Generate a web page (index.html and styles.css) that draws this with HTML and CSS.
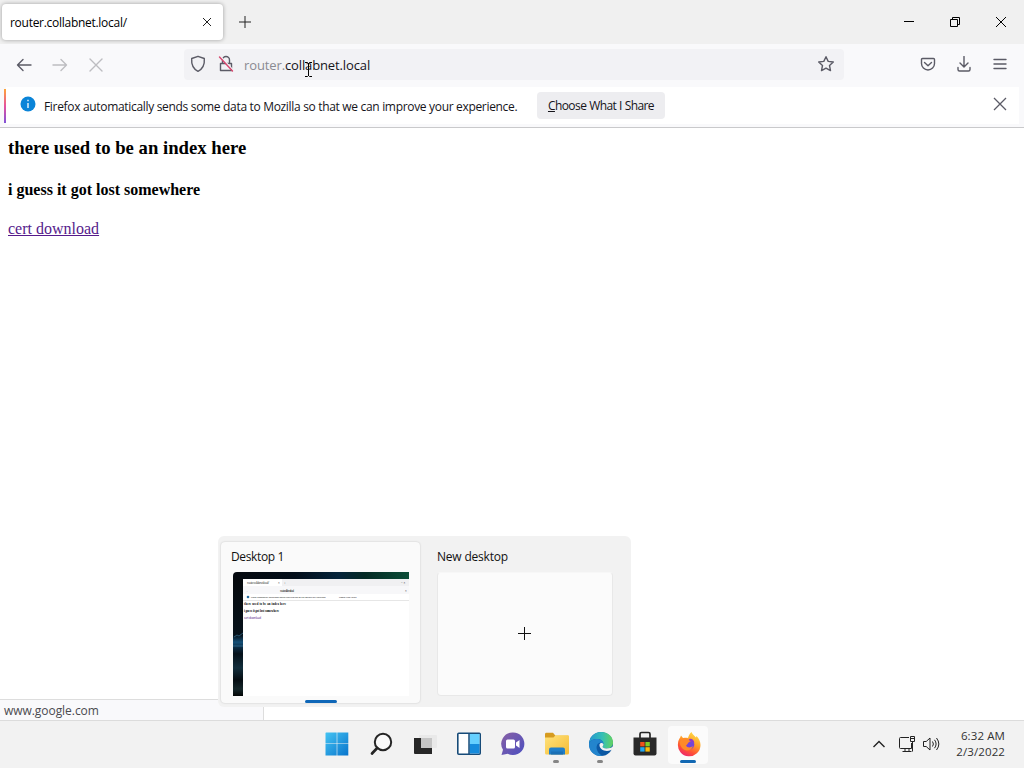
FILE: index.html
```
<!DOCTYPE html>
<html lang="en">
  <head>
    <meta charset="UTF-8" />
    <meta name="viewport" content="width=device-width, initial-scale=1.0" />
    <title>router.collabnet.local/</title>
    <link rel="stylesheet" href="styles.css">
  </head>

  <body>
    <div class="browser">
      <header class="titlebar">
        <div class="tab">
          <span class="tab-title">router.collabnet.local/</span>
          <svg class="tab-close" width="10" height="10" viewBox="0 0 10 10"><path d="M1 1l8 8M9 1l-8 8" /></svg>
        </div>
        <svg class="new-tab" width="12" height="12" viewBox="0 0 12 12"><path d="M6 0v12M0 6h12" /></svg>
        <div class="window-buttons">
          <svg width="12" height="12" viewBox="0 0 12 12"><path d="M1 5.500h10" /></svg>
          <svg width="12" height="12" viewBox="0 0 12 12"><path d="M1.500 3.500h7v7h-7zM3.500 3.500v-2h7v7h-2" /></svg>
          <svg width="12" height="12" viewBox="0 0 12 12"><path d="M1 1l10 10M11 1L1 11" /></svg>
        </div>
      </header>

      <nav class="toolbar">
        <div class="nav-buttons">
          <svg width="16" height="16" viewBox="0 0 16 16"><path d="M15 8H1.500M7 2.500L1.500 8 7 13.500" /></svg>
          <svg class="disabled" width="16" height="16" viewBox="0 0 16 16"><path d="M1 8h13.500M9 2.500L14.500 8 9 13.500" /></svg>
          <svg class="disabled" width="16" height="16" viewBox="0 0 16 16"><path d="M2 2l12 12M14 2L2 14" /></svg>
        </div>
        <div class="urlbar">
          <svg class="shield" width="16" height="18" viewBox="0 0 16 18"><path d="M8 1.300L14.300 3.500C14.800 9.500 12.500 14 8 16.300 3.500 14 1.200 9.500 1.700 3.500z" /></svg>
          <svg class="lock" width="16" height="18" viewBox="0 0 16 18">
            <path d="M4.500 8V5a3.500 3.500 0 0 1 7 0v3M2.500 8.500h11v7h-11z" />
            <path class="slash-gap" d="M2.500 1.500l13 14" />
            <path class="slash" d="M1.500 2l13 14" />
          </svg>
          <span class="url">router.<b>collabnet.local</b></span>
          <svg class="star" width="18" height="18" viewBox="0 0 18 18"><path d="M9 1.700l2.200 4.700 5.100.6-3.800 3.500 1 5.100L9 13.100l-4.500 2.500 1-5.100L1.700 7l5.100-.6z" /></svg>
        </div>
        <div class="tools">
          <svg width="16" height="16" viewBox="0 0 16 16"><path d="M2.500 2.500h11q1 0 1 1v4a6.500 6.500 0 0 1-13 0v-4q0-1 1-1zM4.500 6.500L8 9.800l3.500-3.300" /></svg>
          <svg width="16" height="16" viewBox="0 0 16 16"><path d="M8 .5v10M4 7l4 4 4-4M2 11.500v2q0 1.500 1.500 1.500h9q1.500 0 1.500-1.500v-2" /></svg>
          <svg width="16" height="16" viewBox="0 0 16 16"><path d="M2 3.500h12M2 8h12M2 12.500h12" /></svg>
        </div>
      </nav>

      <div class="notice">
        <svg class="info" width="16" height="16" viewBox="0 0 16 16">
          <circle cx="8" cy="8" r="7.500" />
          <path d="M8 7v5M8 3.800v1.400" />
        </svg>
        <span class="notice-text">Firefox automatically sends some data to Mozilla so that we can improve your experience.</span>
        <button class="share"><u>C</u>hoose What I Share</button>
        <svg class="notice-close" width="14" height="14" viewBox="0 0 14 14"><path d="M1 1l12 12M13 1L1 13" /></svg>
      </div>

      <main class="page">
        <h3>there used to be an index here</h3>
        <h4>i guess it got lost somewhere</h4>
        <a href="#">cert download</a>
      </main>

      <div class="status">www.google.com</div>
    </div>

    <svg class="cursor" width="9" height="17" viewBox="0 0 9 17"><path d="M1 1.500h2.500l1 1 1-1H8M4.500 2v13M1 15.500h2.500l1-1 1 1H8" /></svg>

    <section class="desktops">
      <div class="desktop current">
        <span class="desktop-name">Desktop 1</span>
        <svg class="thumb" width="176" height="124" viewBox="0 0 176 124">
          <defs>
            <linearGradient id="aurora">
              <stop offset="0" stop-color="#05090e" />
              <stop offset=".35" stop-color="#020d19" />
              <stop offset=".6" stop-color="#04233a" />
              <stop offset=".75" stop-color="#042a25" />
              <stop offset="1" stop-color="#0b4d37" />
            </linearGradient>
            <linearGradient id="lake" x2="0" y2="1">
              <stop offset="0" stop-color="#06090d" />
              <stop offset=".48" stop-color="#07121b" />
              <stop offset=".54" stop-color="#155078" />
              <stop offset=".59" stop-color="#0b2940" />
              <stop offset=".64" stop-color="#051019" />
              <stop offset=".76" stop-color="#122e3c" />
              <stop offset=".86" stop-color="#050d12" />
              <stop offset=".94" stop-color="#15272a" />
              <stop offset="1" stop-color="#020506" />
            </linearGradient>
          </defs>
          <path fill="url(#aurora)" d="M4 0h172v8H0V4q0-4 4-4z" />
          <path fill="url(#lake)" d="M0 7h10v117H0z" />
          <path stroke="#3c81a6" d="M1 65l3-2 2 1 4-3M0 74h10" opacity=".6" fill="none" />
          <path fill="#fff" d="M10 7h166v117H10z" />
          <path fill="#f0f0f2" d="M49 7h127v7H49z" />
          <path fill="#f7f7f9" d="M10 14h166v8H10z" />
          <path stroke="#e6e6e6" d="M10 28.500h166" />
          <g class="thumb-text">
            <text x="14" y="11.500" textLength="22">router.collabnet.local/</text>
            <text x="45" y="11.500">×</text>
            <text x="51" y="11.500">+</text>
            <text x="168" y="11.500">− ×</text>
            <text x="13" y="19.500">←</text>
            <text x="47" y="19.500" textLength="14">router.collabnet.local</text>
            <text x="172" y="19.500">×</text>
            <circle cx="15" cy="25" r="1.300" fill="#256ca0" />
            <text class="thumb-notice" x="18" y="26.200">Firefox automatically sends some data to Mozilla so that we can improve your experience.</text>
            <text class="thumb-notice" x="106" y="26.200">Choose What I Share</text>
            <g class="thumb-bold">
              <text x="11" y="33" textLength="42">there used to be an index here</text>
              <text x="11" y="40" textLength="35">i guess it got lost somewhere</text>
            </g>
            <text x="11" y="47" fill="#551a8b" textLength="17">cert download</text>
          </g>
        </svg>
        <div class="marker"></div>
      </div>
      <div class="desktop">
        <span class="desktop-name new">New desktop</span>
        <div class="add">
          <svg width="13" height="13" viewBox="0 0 13 13"><path d="M6.500 0v13M0 6.500h13" /></svg>
        </div>
      </div>
    </section>

    <footer class="taskbar">
      <div></div>
      <div class="apps">
        <!-- start -->
        <div class="app">
          <svg width="24" height="24" viewBox="0 0 24 24">
            <defs><linearGradient id="win" x2="1" y2="1"><stop stop-color="#45c4f3" /><stop offset="1" stop-color="#0874cc" /></linearGradient></defs>
            <path fill="url(#win)" d="M1 .5h10.700v11H.5V1zM12.300.5h11v11h-11zM.5 12.100h11.200v11.400H.5zM12.300 12.100h11v11.400h-11z" />
          </svg>
        </div>
        <!-- search -->
        <div class="app">
          <svg width="24" height="24" viewBox="0 0 24 24">
            <circle cx="14" cy="10" r="8.200" fill="#fafafa" stroke="#252525" stroke-width="2" />
            <path d="M8.200 16L3 21.500" stroke="#252525" stroke-width="2.700" stroke-linecap="round" />
          </svg>
        </div>
        <!-- task view -->
        <div class="app">
          <svg width="24" height="24" viewBox="0 0 24 24">
            <rect x="6" y="3" width="18" height="13" rx="1" fill="#e9e9e9" />
            <path d="M1 6h18v16H2q-1 0-1-1z" fill="#272727" />
            <path d="M8 6h11v10H8z" fill="#c5c5c5" />
          </svg>
        </div>
        <!-- widgets -->
        <div class="app">
          <svg width="24" height="24" viewBox="0 0 24 24">
            <rect x=".8" y="1.300" width="22.400" height="21" rx="1" fill="#fff" stroke="#174b78" stroke-width="1.600" />
            <path d="M12.500 2h10v10h-10z" fill="#66d0ff" />
            <path d="M12.500 12h10v9.500h-10z" fill="#168bdc" />
            <path d="M12 1v21" stroke="#174b78" stroke-width="1.500" />
          </svg>
        </div>
        <!-- chat -->
        <div class="app">
          <svg width="24" height="24" viewBox="0 0 24 24">
            <defs><linearGradient id="chat" x2="1" y2="1"><stop stop-color="#8860a5" /><stop offset="1" stop-color="#4b4fc0" /></linearGradient></defs>
            <path fill="url(#chat)" d="M12 .5a11.300 11.300 0 1 1-5.200 21.300L.5 23l1.500-5.200A11.300 11.300 0 0 1 12 .5z" />
            <rect x="5" y="7.500" width="9" height="9" rx="1.500" fill="#fff" />
            <path d="M15 10.500l3.500-2.500v8L15 13.500z" fill="#fff" />
          </svg>
        </div>
        <!-- explorer -->
        <div class="app">
          <svg width="26" height="24" viewBox="0 0 26 24">
            <defs><linearGradient id="folder" x2="1" y2="1"><stop stop-color="#ffe37c" /><stop offset="1" stop-color="#f5bb35" /></linearGradient></defs>
            <path fill="#d69b20" d="M2 .8h7l2.500 3H24v4H1V2q0-1 1-1.200z" />
            <path fill="url(#folder)" d="M1 5.500h8.500l2-2.300H24q1 0 1 1V21q0 1.500-1.500 1.500h-21Q1 22.500 1 21z" />
            <path fill="#207fc9" d="M5 22.500v-5q0-2 2-2h12q2 0 2 2v5z" />
            <path fill="#1a70b5" d="M7 19.500h12v3H7z" />
          </svg>
          <i class="running"></i>
        </div>
        <!-- edge -->
        <div class="app">
          <svg width="26" height="26" viewBox="0 0 26 26">
            <defs>
              <linearGradient id="edgeTop"><stop stop-color="#2497d0" /><stop offset=".55" stop-color="#34bfb6" /><stop offset="1" stop-color="#63d260" /></linearGradient>
              <linearGradient id="edgeLow" x2="1" y2="1"><stop stop-color="#0d5fb0" /><stop offset="1" stop-color="#0b559e" /></linearGradient>
            </defs>
            <circle cx="13" cy="13" r="12" fill="url(#edgeLow)" />
            <path fill="url(#edgeTop)" d="M1 12.500C2 5 7 1 13 1c7 0 12 4.500 12 10.500 0 4-3 6-6.500 6-3 0-4-1-4-1.700 0-.5 1-1 1-2.800C15.500 10 12.500 8 9 8c-4 0-7 2-8 4.500z" />
            <path fill="#2385cd" d="M1 12.500C3 8.800 6 8 9 8c3.500 0 6.500 2 6.500 5-2-2-5-1.500-6.200.5-2 3.500.2 9 5.200 11.300C6.500 26 .5 20 1 12.500z" />
            <path fill="#f2f2f2" d="M11.500 13.500c1-2 3-1.700 4-.5 0 1.800-1 2.300-1 2.800 0 .7 1 1.700 4 1.700 2.500 0 5-.7 7-2.500V18l-2.800 1.200c-5 2-11.500-.2-11.200-5.700z" />
          </svg>
          <i class="running"></i>
        </div>
        <!-- store -->
        <div class="app">
          <svg width="26" height="26" viewBox="0 0 26 26">
            <path d="M8 7V3q0-1.500 1.500-1.500h7Q18 1.500 18 3v4" fill="none" stroke="#252525" stroke-width="1.700" />
            <path d="M1.500 6.500h23v16q0 2-2 2h-19q-2 0-2-2z" fill="#282828" />
            <path d="M8.200 11h4.400v4.400H8.200z" fill="#f1511b" />
            <path d="M13.400 11h4.400v4.400h-4.400z" fill="#80cc28" />
            <path d="M8.200 16.200h4.400v4.400H8.200z" fill="#22a7f0" />
            <path d="M13.400 16.200h4.400v4.400h-4.400z" fill="#fbbc09" />
          </svg>
        </div>
        <!-- firefox -->
        <div class="app active">
          <svg width="26" height="26" viewBox="0 0 26 26">
            <defs><linearGradient id="fox" x1=".8" y1="0" x2=".3" y2="1"><stop stop-color="#ffe248" /><stop offset=".45" stop-color="#ff9b28" /><stop offset=".75" stop-color="#ff5136" /><stop offset="1" stop-color="#ed246e" /></linearGradient></defs>
            <path fill="url(#fox)" d="M15.500 1c1 2.500 3 3.500 4.500 5.500l.5-1.500c2.500 2.500 4 5.500 4 9A11.300 11.300 0 1 1 2 12.500C2 10 3 8 4.200 6.500L5 4.500 7 7c2-.5 4-.5 5 0 .8-2.500 1.500-4.500 3.500-6z" />
            <circle cx="13.500" cy="13.500" r="4.800" fill="#7545d8" />
            <path fill="#ff8a28" d="M5 8c3-1.500 6-1 8 .5l3 .5c-.5 1.500-2.500 1.500-3.500 2.500-.8 1-1 2-2.500 3 1 2.500 5 2.500 7 .5-1.500 5-8 6-11 2S4 11 5 8z" />
            <path fill="#9138c8" d="M13 8c3-1 5 1 5.300 4-1.500-1.500-3-2-4.500-1.500z" />
          </svg>
          <i class="running wide"></i>
        </div>
      </div>
      <div class="tray">
        <svg class="chevron" width="14" height="8" viewBox="0 0 14 8"><path d="M1.500 7L7 1.500 12.500 7" /></svg>
        <svg width="18" height="18" viewBox="0 0 18 18"><path d="M11 2.500H2.500q-1 0-1 1v9q0 1 1 1h11V8M7 13.500V16M11 13.500V16M4.500 16.500h9M12.500 1.500h4v5h-4zM12.500 3.500h4M14.500 6.500v10" /></svg>
        <svg width="18" height="16" viewBox="0 0 18 16"><path d="M1.500 5.500h2.700L8 2v12l-3.800-3.500H1.500zM10.500 5.500q1.800 2.500 0 5M12.500 3.800q3.200 4.200 0 8.400M14.500 2q4.700 6 0 12" /></svg>
        <div class="clock">
          <span>6:32 AM</span>
          <span>2/3/2022</span>
        </div>
      </div>
    </footer>
  </body>
</html>
```
FILE: styles.css
```
* {
  box-sizing: border-box;
}

body {
  margin: 0;
  width: 1024px;
  height: 768px;
  overflow: hidden;
  display: flex;
  flex-direction: column;
  font-family: "Open Sans", "Noto Sans", sans-serif;
  font-size: 12px;
  color: #15141a;
  background: #fff;
}

svg {
  display: block;
  flex: none;
}

.browser {
  height: 720px;
  display: flex;
  flex-direction: column;
}

/* tab strip */
.titlebar {
  height: 44px;
  display: flex;
  align-items: center;
  padding: 0 17px 0 2px;
  background: #f0f0f0;
}

.titlebar svg {
  fill: none;
  stroke: #222;
}

.tab {
  width: 221px;
  height: 36px;
  display: flex;
  align-items: center;
  justify-content: space-between;
  padding: 0 11px 0 8px;
  background: #fff;
  border-radius: 4px;
  box-shadow: 0 0 4px rgba(0, 0, 0, 0.35);
}

.tab-title {
  padding-top: 1px;
  font-size: 12px;
  letter-spacing: -0.28px;
  color: #000;
}

.new-tab {
  margin-left: 16px;
}

.window-buttons {
  display: flex;
  gap: 34px;
  margin-left: auto;
}

.window-buttons svg {
  stroke: #000;
}

/* navigation */
.toolbar {
  height: 43px;
  display: flex;
  align-items: center;
  padding: 0 16px 2px;
  background: #f9f9fb;
}

.toolbar svg {
  fill: none;
  stroke: #5b5b66;
  stroke-width: 1.4;
  stroke-linejoin: round;
  stroke-linecap: round;
}

.nav-buttons {
  display: flex;
  gap: 20px;
}

.toolbar .disabled {
  stroke: #bdbdc1;
}

.urlbar {
  width: 660px;
  height: 31px;
  display: flex;
  align-items: center;
  margin-left: 80px;
  padding: 0 9px 2px 6px;
  background: #f2f2f5;
  border-radius: 4px;
}

.lock {
  margin-left: 12px;
}

.toolbar .slash-gap {
  stroke: #f2f2f5;
}

.toolbar .slash {
  stroke: #d7476f;
}

.url {
  margin-left: 10px;
  padding-top: 2px;
  font-size: 13px;
  letter-spacing: -0.12px;
  color: #8a8a92;
}

.url b {
  font-weight: 400;
  color: #15141a;
}

.star {
  margin-left: auto;
}

.tools {
  display: flex;
  gap: 20px;
  margin: -2px 0 0 auto;
}

/* data collection bar */
.notice {
  height: 41px;
  display: flex;
  align-items: center;
  padding: 0 17px 4px 20px;
  background: linear-gradient(#ffa436, #e5519e 50%, #8052d8) 4px 2px / 2px 34px no-repeat, linear-gradient(#fff, #fff) 6px 0 / 1013px 37px no-repeat, #f9f9fb;
  border-bottom: 1px solid #c9c9cb;
}

.info {
  margin-top: -2px;
  fill: #0a84d8;
}

.info path {
  stroke: #fff;
  stroke-width: 1.3;
}

.notice-text {
  width: 473px;
  margin-left: 8px;
  padding-top: 3px;
  font-size: 12px;
  letter-spacing: -0.32px;
  white-space: nowrap;
}

.share {
  width: 128px;
  height: 27px;
  margin-left: 20px;
  padding: 1px 0 0;
  border: none;
  border-radius: 4px;
  background: #ededf0;
  color: #15141a;
  font-family: inherit;
  font-size: 12px;
  letter-spacing: -0.58px;
  word-spacing: 0.3px;
  white-space: nowrap;
}

.notice-close {
  margin-top: -2px;
  margin-left: auto;
  fill: none;
  stroke: #5b5b66;
  stroke-width: 1.3;
}

/* page content */
.page {
  flex: 1;
  padding: 9px 8px;
  font-family: "Liberation Serif", serif;
  font-size: 16px;
  color: #000;
}

.page h3 {
  margin: 0;
  font-size: 18.72px;
  line-height: 22px;
}

.page h4 {
  margin: 22px 0 20px;
  font-size: 16px;
  line-height: 18px;
}

.page a {
  line-height: 20px;
  color: #551a8b;
}

.status {
  width: 264px;
  height: 21px;
  padding-left: 4px;
  line-height: 22px;
  letter-spacing: -0.05px;
  color: #4a4a4f;
  background: #f9f9fb;
  border-top: 1px solid #ddd;
  border-right: 1px solid #ddd;
}

.cursor {
  position: absolute;
  left: 304px;
  top: 61px;
  fill: none;
  stroke: #000;
}

/* virtual desktops flyout */
.desktops {
  position: absolute;
  left: 218px;
  top: 536px;
  width: 413px;
  height: 171px;
  display: flex;
  gap: 5px;
  padding: 6px 3px 3px;
  background: #f2f2f2;
  border-radius: 6px;
}

.desktop {
  width: 199px;
  height: 161px;
  display: flex;
  flex-direction: column;
  align-items: center;
  border-radius: 4px;
}

.current {
  background: #fafafa;
  box-shadow: 0 0 2px rgba(0, 0, 0, 0.2);
}

.desktop-name {
  width: 179px;
  height: 30px;
  line-height: 30px;
  letter-spacing: -0.35px;
  color: #111;
}

.new {
  width: 175px;
  letter-spacing: -0.2px;
}

.marker {
  width: 32px;
  height: 3px;
  margin-top: 4px;
  border-radius: 2px;
  background: #0f67b8;
}

.thumb-text {
  font-size: 3px;
  fill: #333;
}

.thumb-notice {
  font-size: 1.8px;
  fill: #000;
}

.thumb-bold {
  font-family: "Liberation Serif", serif;
  font-weight: bold;
  fill: #000;
}

.add {
  width: 176px;
  height: 124px;
  display: flex;
  align-items: center;
  justify-content: center;
  padding-bottom: 1px;
  background: #fbfbfb;
  border: 1px solid #e8e8e8;
  border-top-color: #f7f7f7;
  border-radius: 4px;
}

.add svg {
  stroke: #111;
}

/* taskbar */
.taskbar {
  height: 48px;
  display: grid;
  grid-template-columns: 1fr auto 1fr;
  background: #f2f2f2;
  border-top: 1px solid #dcdcdc;
}

.apps {
  display: flex;
  align-items: center;
}

.app {
  position: relative;
  width: 40px;
  height: 40px;
  margin: 0 2px;
  padding: 0 0 2px 1px;
  display: flex;
  align-items: center;
  justify-content: center;
  border-radius: 4px;
}

.active {
  height: 38px;
  background: #fbfbfb;
}

.running {
  position: absolute;
  left: 17px;
  bottom: 2px;
  width: 6px;
  height: 3px;
  border-radius: 2px;
  background: #858585;
}

.wide {
  left: 12px;
  bottom: 1px;
  width: 16px;
  background: #1268b3;
}

.tray {
  display: flex;
  align-items: center;
  justify-content: flex-end;
  padding: 0 19px 2px 0;
}

.tray svg {
  fill: none;
  stroke: #222;
}

.tray .chevron {
  stroke-width: 1.4;
}

.tray svg + svg {
  margin-left: 12px;
}

.tray svg + svg + svg {
  margin-left: 6px;
}

.clock {
  width: 50px;
  margin-left: 15px;
  display: flex;
  flex-direction: column;
  align-items: flex-end;
  font-size: 11.5px;
  line-height: 16px;
  letter-spacing: 0.1px;
  white-space: nowrap;
  color: #333;
}
```
